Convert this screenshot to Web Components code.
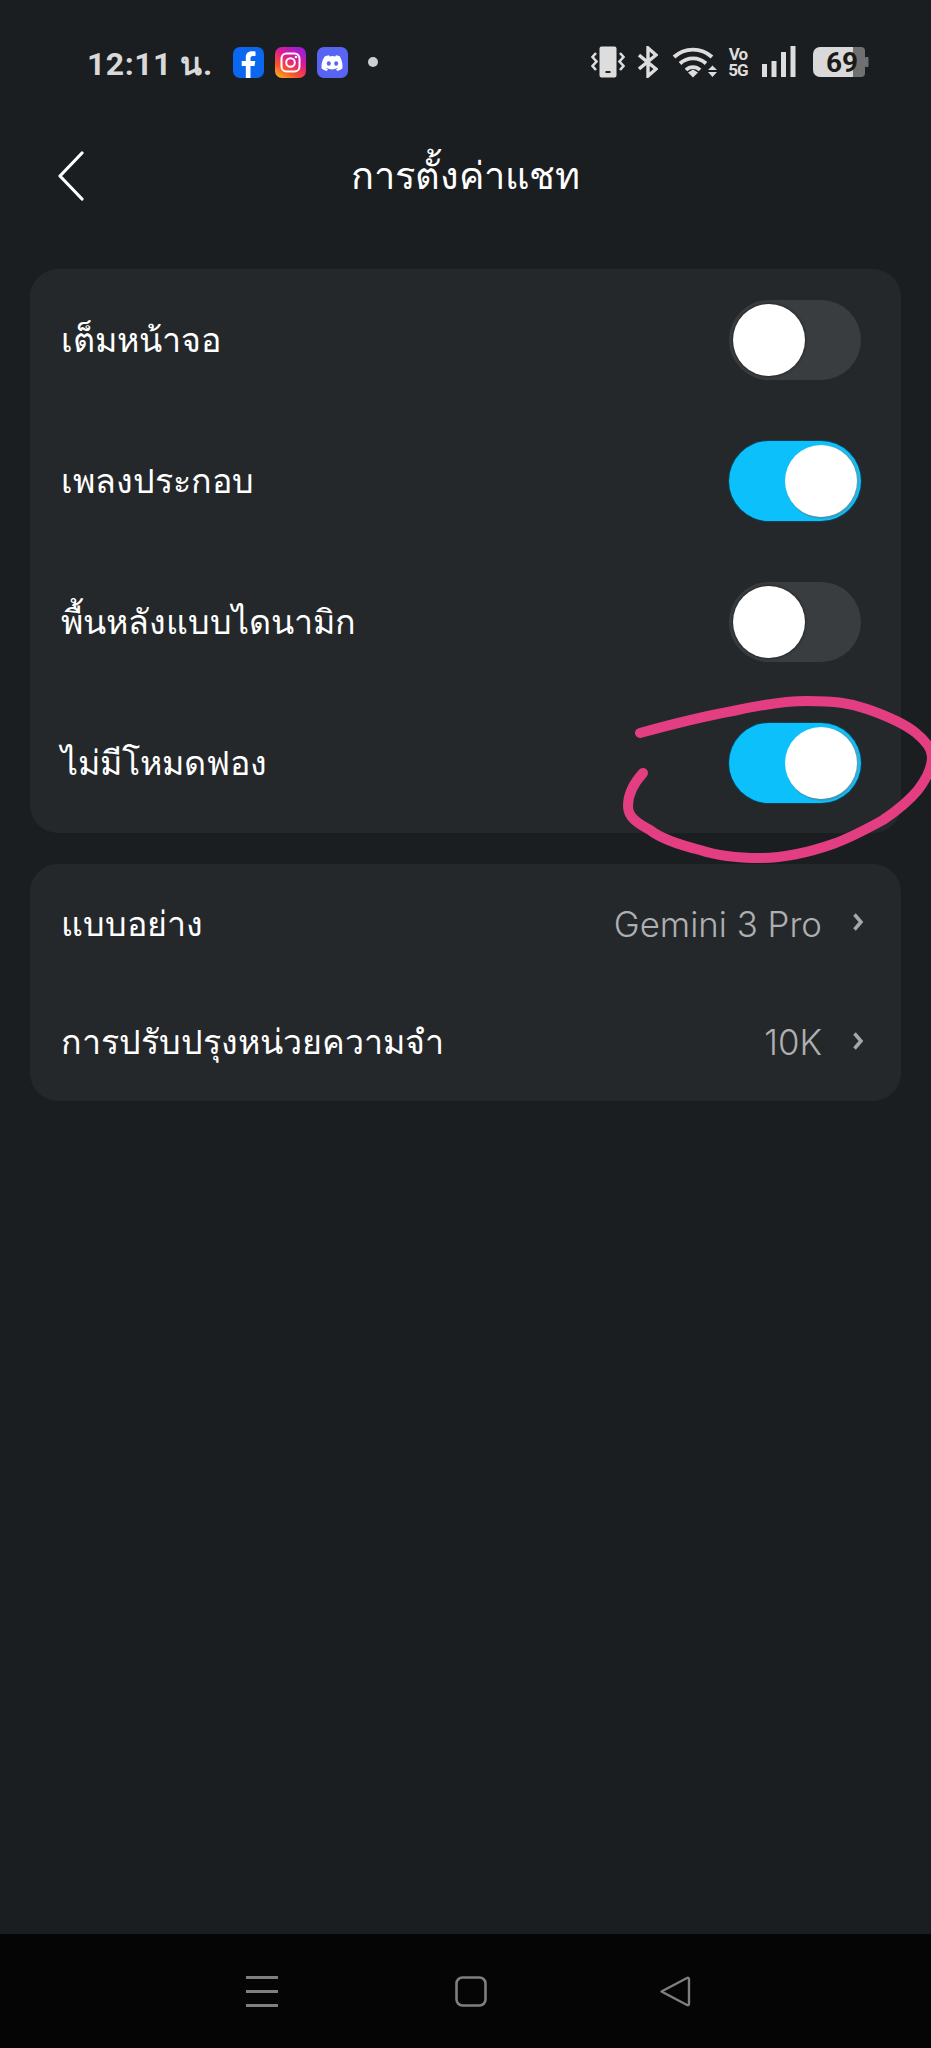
<!DOCTYPE html>
<html lang="th"><head><meta charset="utf-8"><title>การตั้งค่าแชท</title>
<style>
html,body{margin:0;padding:0;background:#1b1e21}
body{width:931px;height:2048px;position:relative;overflow:hidden;font-family:"Noto Sans","Roboto","Noto Sans CJK SC",sans-serif;display:flex;flex-direction:column}
</style></head><body>
<status-bar></status-bar>
<app-header>การตั้งค่าแชท</app-header>
<main-area>
<setting-card style="margin-bottom:31px">
<setting-row label="เต็มหน้าจอ"><app-toggle></app-toggle></setting-row>
<setting-row label="เพลงประกอบ"><app-toggle on></app-toggle></setting-row>
<setting-row label="พื้นหลังแบบไดนามิก"><app-toggle></app-toggle></setting-row>
<setting-row label="ไม่มีโหมดฟอง"><app-toggle on></app-toggle></setting-row>
</setting-card>
<setting-card compact>
<link-row label="แบบอย่าง" value="Gemini 3 Pro"></link-row>
<link-row label="การปรับปรุงหน่วยความจำ" value="10K"></link-row>
</setting-card>
</main-area>
<nav-bar></nav-bar>
<scribble-mark></scribble-mark>
<script>
function def(name, html){
  customElements.define(name, class extends HTMLElement{
    connectedCallback(){
      if(this.shadowRoot) return;
      const s=this.attachShadow({mode:'open'});
      s.innerHTML=html;
    }
  });
}
def('status-bar',`<style>
:host{display:flex;align-items:center;height:124px;padding:0 61px 0 87px;box-sizing:border-box;color:#d9d9d9;flex:none}
.t{font:700 32px/1 Roboto,"Noto Sans",sans-serif;letter-spacing:.5px;margin-top:4px;white-space:nowrap;width:124px}
.l{display:flex;align-items:center;gap:11px;margin-left:22px}
.d{width:10px;height:10px;border-radius:50%;background:#cfcfcf;margin-left:9px}
.sp{flex:1}
.r{display:flex;align-items:center}
svg{display:block}
.vo{width:20px;margin-left:10px;font:700 17px/16px Roboto,sans-serif;letter-spacing:-1px;color:#ddd;text-align:center}
</style>
<span class="t">12:11 น.</span>
<div class="l">
<svg width="31" height="31" viewBox="0 0 31 31"><rect width="31" height="31" rx="7" fill="#0b67f0"/><path d="M17.5 31V19h4l.8-5h-4.8v-2.6c0-1.5.6-2.4 2.4-2.4h2.6V4.6c-1-.2-2.3-.3-3.6-.3-3.8 0-6.1 2.2-6.1 6.3V14H8.700v5h4.100v12z" fill="#fff"/></svg>
<svg width="31" height="31" viewBox="0 0 31 31"><defs><linearGradient id="g" x1="0" y1="1" x2=".6" y2="0"><stop offset="0" stop-color="#fdc11d"/><stop offset=".35" stop-color="#f9522c"/><stop offset=".7" stop-color="#dd1c8f"/><stop offset="1" stop-color="#a61ed0"/></linearGradient></defs><rect width="31" height="31" rx="7" fill="url(#g)"/><rect x="6.500" y="6.500" width="18" height="18" rx="5" fill="none" stroke="#fff" stroke-width="2"/><circle cx="15.500" cy="15.500" r="4.300" fill="none" stroke="#fff" stroke-width="2"/><circle cx="21" cy="10" r="1.300" fill="#fff"/></svg>
<svg width="31" height="31" viewBox="0 0 31 31"><rect width="31" height="31" rx="7" fill="#5865f2"/><path d="M23.300 9.500a16 16 0 0 0-4.300-1.300l-.6 1.200a15 15 0 0 0-5.800 0l-.6-1.200a16 16 0 0 0-4.300 1.300C4.900 13.600 4.200 17.500 4.600 21.400a16 16 0 0 0 5.200 2.600l1.100-1.800-1.800-.9.400-.3a11.500 11.500 0 0 0 11 0l.4.3-1.800.9 1.100 1.800a16 16 0 0 0 5.200-2.600c.5-4.500-.7-8.400-2.500-11.900z" fill="#fff"/><ellipse cx="11.800" cy="16.500" rx="2" ry="2.300" fill="#5865f2"/><ellipse cx="19.200" cy="16.500" rx="2" ry="2.300" fill="#5865f2"/></svg>
<span class="d"></span>
</div>
<span class="sp"></span>
<div class="r">
<svg width="34" height="32" viewBox="0 0 34 32"><rect x="8.500" y="0.500" width="17" height="31" rx="2" fill="#ddd"/><rect x="14.500" y="25" width="5" height="2" fill="#222"/><path d="M5 7L1.500 11l4 4.500-4 4.500L5 24M29 7l3.500 4-4 4.500 4 4.500L29 24" fill="none" stroke="#ddd" stroke-width="2.600"/></svg>
<svg style="margin-left:13px" width="20" height="32" viewBox="0 0 20 32"><path d="M1 9l17 14-8 7V2l8 7L1 23" fill="none" stroke="#ddd" stroke-width="3.400"/></svg>
<svg style="margin-left:14px" width="46" height="32" viewBox="0 0 46 32"><path d="M2 11a28 28 0 0 1 38 0M8 17.500a19 19 0 0 1 26 0M14 24a10 10 0 0 1 14 0" fill="none" stroke="#ddd" stroke-width="3.800"/><path d="M16 26.500l5-3 5 3-5 5z" fill="#ddd"/><path d="M36 24l4.500-4.500L45 24zM36 26h9l-4.500 5z" fill="#ddd"/></svg>
<div class="vo">Vo<br>5G</div>
<svg style="margin-left:13px" width="36" height="32" viewBox="0 0 36 32"><path d="M1 18h5v13H1zM10.500 15h5v16h-5zM20 6h5v25h-5zM29.500 0h5v31h-5z" fill="#ddd"/></svg>
<svg style="margin-left:15px" width="58" height="32" viewBox="0 0 58 32"><path d="M8 1h33v30H8a7 7 0 0 1-7-7V8a7 7 0 0 1 7-7z" fill="#d9d9d9"/><path d="M41 1h8a4 4 0 0 1 4 4v22a4 4 0 0 1-4 4h-8z" fill="#707070"/><rect x="53" y="11" width="3.500" height="10" rx="1" fill="#707070"/><text x="14" y="26" font-family="Roboto" font-weight="700" font-size="28" fill="#1a1a1a">69</text></svg>
</div>`);
def('app-header',`<style>
:host{display:flex;align-items:center;justify-content:center;position:relative;height:109px;color:#fff;flex:none;font-size:38px;box-sizing:border-box;margin-bottom:36px}
span{margin-top:-7px}
svg{position:absolute;left:57px;top:27px}
</style><svg width="28" height="50" viewBox="0 0 28 50"><path d="M25 2L3 25l22 23" fill="none" stroke="#fff" stroke-width="3.200" stroke-linecap="round" stroke-linejoin="round"/></svg><span><slot></slot></span>`);
def('main-area',`<style>:host{display:flex;flex-direction:column;flex:1;padding:0 30px}</style><slot></slot>`);
def('setting-card',`<style>:host{display:flex;flex-direction:column;background:#25282b;border-radius:28px;flex:none}</style><slot></slot>`);
customElements.define('setting-row',class extends HTMLElement{connectedCallback(){if(this.shadowRoot)return;const s=this.attachShadow({mode:'open'});s.innerHTML=`<style>
:host{display:flex;align-items:center;justify-content:space-between;height:141px;padding:0 40px 0 31px;color:#fff;font-size:34px}
span{margin-top:1px}
</style><span>${this.getAttribute('label')}</span><slot></slot>`;}});
customElements.define('app-toggle',class extends HTMLElement{connectedCallback(){if(this.shadowRoot)return;const s=this.attachShadow({mode:'open'});s.innerHTML=`<style>
:host{display:block;position:relative;width:132px;height:80px;border-radius:40px;background:#3a3d40}
:host([on]){background:#0cc0fb;box-shadow:0 0 0 1px #0c4055}
i{position:absolute;top:4px;left:4px;width:72px;height:72px;border-radius:50%;background:#fff;box-shadow:0 0 3px #15171a}
:host([on]) i{left:56px;box-shadow:2px 0 0 #4ea3bd,1px 2px 0 #3e97b4}
</style><i></i>`;}});
customElements.define('link-row',class extends HTMLElement{connectedCallback(){if(this.shadowRoot)return;const s=this.attachShadow({mode:'open'});s.innerHTML=`<style>
:host{display:flex;align-items:center;height:118.500px;padding:0 37px 0 31px;color:#fff;font-size:34px}
.l{flex:1;margin-top:1px}.v{color:#adafb1;font:300 34.800px Inter,Roboto,"Noto Sans",sans-serif;margin-top:1px}
svg{margin-left:30px;margin-top:-2px}
</style><span class="l">${this.getAttribute('label')}</span><span class="v">${this.getAttribute('value')}</span><svg width="12" height="20" viewBox="0 0 12 20"><path d="M2.500 2.500l6.500 7.500-6.500 7.500" fill="none" stroke="#a5a7a9" stroke-width="3.500"/></svg>`;}});
def('nav-bar',`<style>
:host{display:flex;align-items:center;height:114px;background:#050505;flex:none;box-sizing:border-box;padding-left:246px}
svg{display:block}
</style>
<svg width="32" height="31" viewBox="0 0 32 31"><path d="M0 1.500h32M0 15.500h32M0 29.500h32" stroke="#7f7f7f" stroke-width="3"/></svg>
<svg style="margin-left:177px" width="32" height="31" viewBox="0 0 32 31"><rect x="1.500" y="1.500" width="29" height="28" rx="6" fill="none" stroke="#7f7f7f" stroke-width="2.600"/></svg>
<svg style="margin-left:172px" width="33" height="31" viewBox="0 0 33 31"><path d="M2.500 15.500L28 2q2-.8 2 1.500v24q0 2.200-2 1.500z" fill="none" stroke="#7f7f7f" stroke-width="2.400" stroke-linejoin="round"/></svg>`);
def('scribble-mark',`<style>:host{position:absolute;left:0;top:0;width:931px;height:2048px;pointer-events:none}svg{display:block}</style>
<svg width="931" height="2048" viewBox="0 0 931 2048"><path d="M640 733C680 722 700 717 733 711C760 705 785 701 807 701C835 701 850 703 867 709C890 717 905 724 916 733C927 742 932 750 932 757C932 768 927 778 918 790C907 803 895 812 883 820C865 830 850 838 833 844C810 852 785 858 760 858C735 858 715 855 700 850C680 845 660 838 650 830C635 822 628 816 628 806C628 795 632 785 643 773" fill="none" stroke="#e43e82" stroke-width="10" stroke-linecap="round" stroke-linejoin="round"/></svg>`);
</script>
</body></html>
